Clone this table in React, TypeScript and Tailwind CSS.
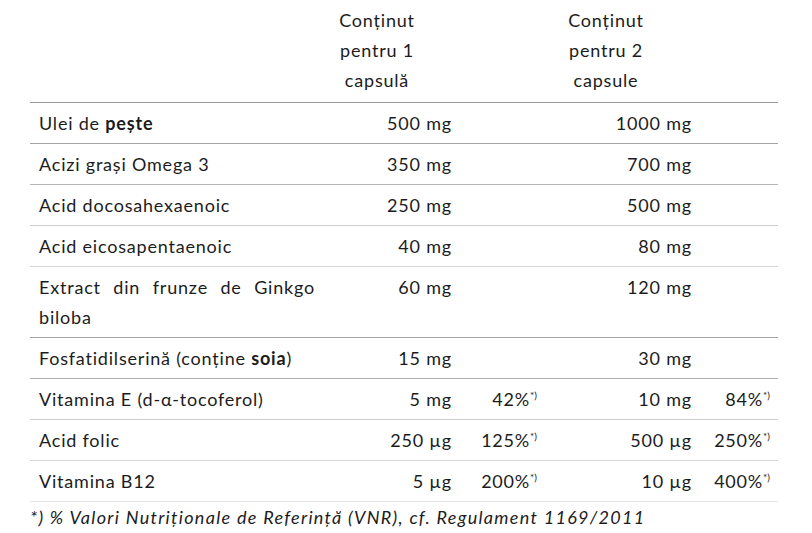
type Row = {
  label: React.ReactNode
  a1: string
  p1?: string
  a2: string
  p2?: string
  line: string
}

const rows: Row[] = [
  { label: <>Ulei de <b>pește</b></>, a1: "500 mg", a2: "1000 mg", line: "border-[#a3a3a3]" },
  { label: "Acizi grași Omega 3", a1: "350 mg", a2: "700 mg", line: "border-[#b5b5b5]" },
  { label: "Acid docosahexaenoic", a1: "250 mg", a2: "500 mg", line: "border-[#cfcfcf]" },
  { label: "Acid eicosapentaenoic", a1: "40 mg", a2: "80 mg", line: "border-[#d6d6d6]" },
  { label: "Extract din frunze de Ginkgo biloba", a1: "60 mg", a2: "120 mg", line: "border-[#a3a3a3]" },
  { label: <>Fosfatidilserină (conține <b>soia</b>)</>, a1: "15 mg", a2: "30 mg", line: "border-[#b0b0b0]" },
  { label: "Vitamina E (d-α-tocoferol)", a1: "5 mg", p1: "42%", a2: "10 mg", p2: "84%", line: "border-[#cfcfcf]" },
  { label: "Acid folic", a1: "250 µg", p1: "125%", a2: "500 µg", p2: "250%", line: "border-[#d6d6d6]" },
  { label: "Vitamina B12", a1: "5 µg", p1: "200%", a2: "10 µg", p2: "400%", line: "border-[#e6e6e6]" },
]

function Pct({ v }: { v?: string }) {
  if (!v) return null
  return (
    <>
      {v}
      <span className="text-[10px] leading-none align-[7px] tracking-normal">*)</span>
    </>
  )
}

const cols = "grid grid-cols-[300px_132px_83px_155px_78px]"

export default function App() {
  return (
    <main className="bg-white w-[812px] h-[533px] text-[#1c1c1c] font-['Lato','Liberation_Sans',sans-serif] text-[18px] leading-[30px] tracking-[0.8px]">
      <div className="ml-[30px] w-[748px]">
        <div className={`${cols} pt-[5px] pb-[7px] border-b border-[#9a9a9a]`}>
          <div />
          <div className="text-center pr-[38px]">
            Conținut<br />pentru 1<br />capsulă
          </div>
          <div />
          <div className="text-center pr-[33px]">
            Conținut<br />pentru 2<br />capsule
          </div>
          <div />
        </div>

        {rows.map((r, i) => (
          <div key={i} className={`${cols} py-[5px] border-b ${r.line}`}>
            <div className="pl-[9px] pr-[15px] text-justify">{r.label}</div>
            <div className="text-right pr-[10px]">{r.a1}</div>
            <div className="text-right pr-[8px]"><Pct v={r.p1} /></div>
            <div className="text-right pr-[8px]">{r.a2}</div>
            <div className="text-right pr-[8px]"><Pct v={r.p2} /></div>
          </div>
        ))}

        <p className="italic tracking-[1.3px]">
          *) % Valori Nutriționale de Referință (VNR), cf. Regulament 1169/2011
        </p>
      </div>
    </main>
  )
}
